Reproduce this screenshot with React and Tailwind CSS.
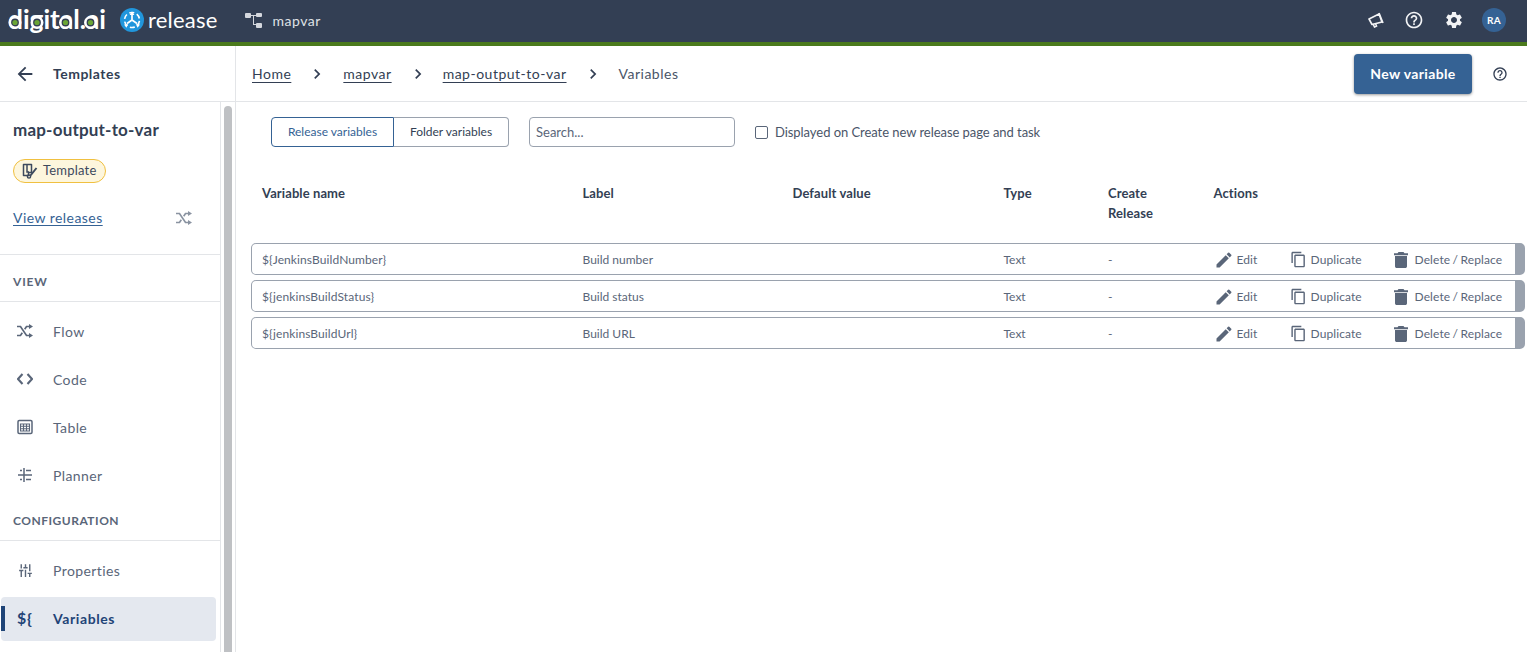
import React from "react";
import { MdArrowBack, MdChevronRight, MdEdit, MdOutlineContentCopy, MdSettings, MdHelpOutline, MdOutlineTune } from "react-icons/md";

const rows = [
  { name: "${JenkinsBuildNumber}", label: "Build number" },
  { name: "${jenkinsBuildStatus}", label: "Build status" },
  { name: "${jenkinsBuildUrl}", label: "Build URL" },
];

const logoDots = [7, 29, 57.5, 82.5];

function DigitalLogo() {
  return (
    <svg width="100" height="34" viewBox="0 0 100 34" className="shrink-0">
      <text x="0" y="26" fill="#fff" fontFamily="Lato, sans-serif" fontSize="26" fontWeight="700" textLength="98" lengthAdjust="spacingAndGlyphs">digital.ai</text>
      {logoDots.map(x => (
        <g key={x}>
          <circle cx={x} cy="19.5" r="5.2" fill="#333f54" stroke="#fff" strokeWidth="2.6" />
          <circle cx={x} cy="19.5" r="2.6" fill="#6aa535" />
        </g>
      ))}
    </svg>
  );
}

function ReleaseIcon() {
  return (
    <svg width="24" height="24" viewBox="0 0 24 24" fill="none">
      <circle cx="12" cy="12" r="12" fill="#2196dc" />
      <circle cx="12" cy="12" r="7.5" stroke="#fff" strokeWidth="1.6" strokeDasharray="5 2.85" strokeDashoffset="-1" />
      <path d="M12 6v6M12 12l-5 3.5M12 12l5 3.5" stroke="#fff" strokeWidth="1.7" />
      <path d="M9.6 7L12 3.6 14.4 7zM4 16.6l4.1-.4-1.7 3.6zM20 16.6l-4.1-.4 1.7 3.6z" fill="#fff" />
    </svg>
  );
}

function TreeIcon() {
  return (
    <svg width="17" height="16" viewBox="0 0 17 16" fill="#d5d8de">
      <rect x="0" y="1" width="6" height="5" rx="1" />
      <rect x="11" y="1" width="6" height="4" rx="1" />
      <rect x="11" y="11" width="6" height="5" rx="1" />
      <path d="M5 3h7v1H9v8h3v1H8V4H5z" />
    </svg>
  );
}

function MegaphoneIcon() {
  return (
    <svg width="17" height="16" viewBox="0 0 17 16" fill="none" stroke="#f2f3f5" strokeWidth="1.6">
      <path d="M1 7l10-5 3 8-10 2.5z" strokeLinejoin="round" />
      <path d="M5 12l1.5 3 2-1-1-2.5" />
      <path d="M11 1l4 10" />
    </svg>
  );
}

function TemplateIcon() {
  return (
    <svg width="16" height="16" viewBox="0 0 16 16" fill="none" stroke="#3d4a5e" strokeWidth="1.5">
      <path d="M1.5 1.5h8v8h-3v3h-5z" strokeLinejoin="round" />
      <path d="M5 2v7h2" />
      <path d="M14.5 5l-6 7.5" strokeWidth="2" />
      <circle cx="7" cy="13.5" r="1.6" />
    </svg>
  );
}

function ShuffleIcon({ color = "#5a6679" }) {
  return (
    <svg width="16" height="14" viewBox="0 0 16 14" fill="none" stroke={color} strokeWidth="1.7">
      <path d="M0 2.5h3.5l6 9H12M0 11.5h3.5l1.8-2.7M7.7 5.2l1.8-2.7H12" />
      <path d="M12 0l4 2.5L12 5zM12 9l4 2.5-4 2.5z" fill={color} stroke="none" />
    </svg>
  );
}

function CodeIcon() {
  return (
    <svg width="16" height="12" viewBox="0 0 16 12" fill="none" stroke="#5a6679" strokeWidth="2.1">
      <path d="M5.5 1L1 6l4.5 5M10.5 1L15 6l-4.5 5" />
    </svg>
  );
}

function TableIcon() {
  return (
    <svg width="16" height="16" viewBox="0 0 16 16" fill="none" stroke="#5a6679" strokeWidth="1.1">
      <rect x="1" y="1.5" width="14" height="13" rx="1.2" strokeWidth="1.5" />
      <path d="M3.5 5h9v7h-9zM3.5 7.3h9M3.5 9.7h9M6.5 5v7M9.5 5v7" />
    </svg>
  );
}

function PlannerIcon() {
  return (
    <svg width="16" height="16" viewBox="0 0 16 16" fill="none" stroke="#5a6679" strokeWidth="1.5">
      <path d="M7 1v14M1 8h14M9 3.5h5M9 12.5h5M3 3.5h2M3 12.5h2" />
    </svg>
  );
}

function TrashIcon() {
  return (
    <svg width="14" height="16" viewBox="0 0 14 16" fill="#5a6679" className="shrink-0">
      <path d="M4.5 0h5l1 1.2H14v2H0v-2h3.5z" />
      <path d="M1 4h12v10.2c0 1-.8 1.8-1.8 1.8H2.8C1.8 16 1 15.2 1 14.2z" />
    </svg>
  );
}

function NavItem({ icon, label }) {
  return (
    <div className="flex h-12 items-center pl-[17px] text-[14px] tracking-[0.4px] text-[#5a6679]">
      <span className="flex w-9 shrink-0 items-center text-[#5a6679]">{icon}</span>
      <span>{label}</span>
    </div>
  );
}

function Action({ icon, label, className }) {
  return (
    <span className={"flex items-center tracking-[0.1px] " + className}>
      {icon}
      {label}
    </span>
  );
}

function Crumb({ children }) {
  return <a className="text-[14px] tracking-[0.5px] text-[#333f54] underline underline-offset-[3px]">{children}</a>;
}

export default function App() {
  return (
    <div className="flex h-[652px] flex-col overflow-hidden bg-white font-['Lato',sans-serif] text-[#333f54]">
      <header className="flex h-[46px] shrink-0 items-center border-b-4 border-[#4b7a1c] bg-[#333f54] pr-[21px] pb-[2px] pl-2">
        <DigitalLogo />
        <div className="ml-[12px] flex items-center gap-[4px]">
          <ReleaseIcon />
          <span className="text-[22px] leading-none tracking-[0.2px] text-white">release</span>
        </div>
        <span className="ml-[28px]"><TreeIcon /></span>
        <span className="ml-[10px] text-[14px] tracking-[0.5px] text-[#dfe2e6]">mapvar</span>
        <div className="ml-auto flex items-center">
          <MegaphoneIcon />
          <MdHelpOutline className="ml-[19px] text-[#f2f3f5]" size={20} />
          <MdSettings className="ml-[20px] text-[#f2f3f5]" size={20} />
          <span className="ml-[18px] flex h-6 w-6 items-center justify-center rounded-full bg-[#356294] text-[10px] font-bold tracking-[0.3px] text-white">RA</span>
        </div>
      </header>

      <div className="flex min-h-0 flex-1">
        <aside className="flex w-[236px] shrink-0 flex-col border-r border-[#e3e5e8]">
          <div className="flex h-[56px] shrink-0 items-center border-b border-[#e3e5e8] pl-[14px]">
            <MdArrowBack size={22} className="text-[#333f54]" />
            <span className="ml-[17px] text-[14px] font-bold tracking-[0.5px]">Templates</span>
          </div>
          <div className="flex min-h-0 flex-1">
            <div className="w-[221px] shrink-0 border-r border-[#e3e5e8]">
              <div className="h-[153px] border-b border-[#e3e5e8] pl-[13px]">
                <h1 className="pt-[17px] text-[17px] leading-[21px] font-bold tracking-[0.2px]">map-output-to-var</h1>
                <div className="mt-[19px] flex h-6 w-[93px] items-center gap-[5px] rounded-full border border-[#f0c040] bg-[#fdf6dd] pl-2 text-[13px] tracking-[0.2px] text-[#3d4a5e]">
                  <TemplateIcon />
                  Template
                </div>
                <div className="mt-[24px] flex items-center pr-[28px]">
                  <a className="text-[14px] tracking-[0.45px] text-[#356294] underline underline-offset-2">View releases</a>
                  <span className="ml-auto"><ShuffleIcon color="#8a93a1" /></span>
                </div>
              </div>
              <div className="flex h-[47px] items-center border-b border-[#e3e5e8] pt-[8px] pl-[13px] text-[12px] font-bold tracking-[0.8px] text-[#5a6679]">VIEW</div>
              <div className="pt-[5px]">
                <NavItem icon={<ShuffleIcon />} label="Flow" />
                <NavItem icon={<CodeIcon />} label="Code" />
                <NavItem icon={<TableIcon />} label="Table" />
                <NavItem icon={<PlannerIcon />} label="Planner" />
              </div>
              <div className="flex h-[42px] items-center border-b border-[#e3e5e8] pt-[3px] pl-[13px] text-[12px] font-bold tracking-[0.5px] text-[#5a6679]">CONFIGURATION</div>
              <div className="pt-[5px]">
                <NavItem icon={<MdOutlineTune size={17} className="rotate-90" />} label="Properties" />
                <div className="relative mt-[3px] mr-1 ml-px flex h-11 items-center rounded-[4px] bg-[#e4e8ef] pb-[2px] pl-4 text-[14px] font-bold tracking-[0.6px] text-[#1f4477]">
                  <span className="absolute top-[9px] left-0 h-[25px] w-1 bg-[#1f4477]"></span>
                  <span className="w-9 shrink-0 text-[16px]">{"${"}</span>
                  Variables
                </div>
              </div>
            </div>
            <div className="flex-1 pt-[4px] pl-[3px]">
              <div className="h-full w-2 rounded-t-full bg-[#bfc1c4]"></div>
            </div>
          </div>
        </aside>

        <main className="min-w-0 flex-1">
          <div className="flex h-[56px] items-center border-b border-[#e3e5e8] pr-[19px] pl-4">
            <Crumb>Home</Crumb>
            <MdChevronRight size={20} className="mx-[16px]" />
            <Crumb>mapvar</Crumb>
            <MdChevronRight size={20} className="mr-[15px] ml-[16px]" />
            <Crumb>map-output-to-var</Crumb>
            <MdChevronRight size={20} className="mx-[16px]" />
            <span className="text-[14px] tracking-[0.5px] text-[#4a5568]">Variables</span>
            <button className="mt-[1px] ml-auto h-10 w-[118px] rounded-[4px] bg-[#356294] pb-[2px] text-[14px] font-bold tracking-[0.35px] text-white shadow-[0_1px_3px_rgba(0,0,0,0.4)]">New variable</button>
            <MdHelpOutline size={16} className="ml-5 text-[#333f54]" />
          </div>

          <div className="pt-[15px] pl-[15px]">
            <div className="flex items-center pl-5">
              <div className="flex h-[30px] text-[12px]">
                <button className="w-[123px] rounded-l-[4px] border border-[#356294] text-[#356294]">Release variables</button>
                <button className="w-[115px] rounded-r-[4px] border border-l-0 border-[#9aa2ae] text-[#333f54]">Folder variables</button>
              </div>
              <input placeholder="Search..." className="ml-5 h-[30px] w-[206px] rounded-[4px] border border-[#9aa2ae] px-[6px] text-[13px] outline-none placeholder:text-[#5a6679]" />
              <span className="ml-5 h-[13px] w-[13px] rounded-[2px] border border-[#5a6679]"></span>
              <span className="ml-[7px] pt-[1px] text-[13px] tracking-[-0.05px] text-[#4a5568]">Displayed on Create new release page and task</span>
            </div>

            <div className="mt-[36px] grid grid-cols-[320.5px_210px_211px_104.5px_105.5px_1fr] pl-[11px] text-[13px] leading-[20px] font-bold tracking-[0.1px]">
              <span>Variable name</span>
              <span>Label</span>
              <span>Default value</span>
              <span>Type</span>
              <span>Create<br />Release</span>
              <span>Actions</span>
            </div>

            <div className="mt-[20px] flex flex-col gap-[5px] pr-[2px]">
              {rows.map(row => (
                <div key={row.name} className="grid h-8 grid-cols-[320.5px_210px_211px_104.5px_105.5px_1fr] items-center rounded-[5px] border border-r-[10px] border-[#9aa2ae] pt-[1px] pl-[10px] text-[12px] text-[#5a6679]">
                  <span className="tracking-[0.1px]">{row.name}</span>
                  <span>{row.label}</span>
                  <span></span>
                  <span>Text</span>
                  <span>-</span>
                  <div className="flex items-center">
                    <Action className="w-[76px] gap-[3px]" icon={<MdEdit size={20} />} label="Edit" />
                    <Action className="w-[104px] gap-[4px]" icon={<MdOutlineContentCopy size={17} />} label="Duplicate" />
                    <Action className="gap-[7px] [word-spacing:-0.8px]" icon={<TrashIcon />} label="Delete / Replace" />
                  </div>
                </div>
              ))}
            </div>
          </div>
        </main>
      </div>
    </div>
  );
}
